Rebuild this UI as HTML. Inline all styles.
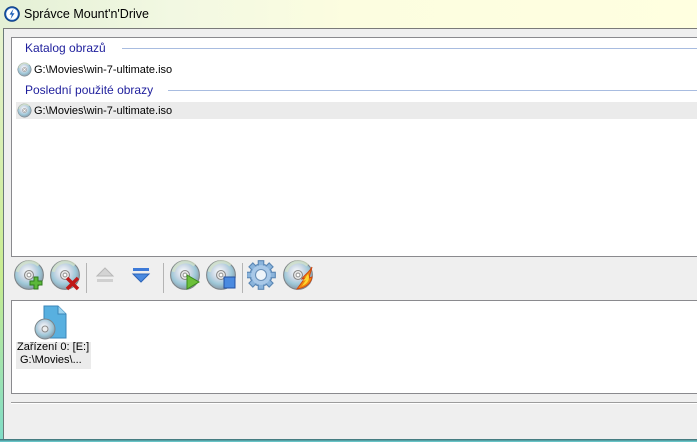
<!DOCTYPE html>
<html><head><meta charset="utf-8"><style>
*{margin:0;padding:0;box-sizing:border-box}
body{width:697px;height:442px;overflow:hidden;position:relative;font-family:"Liberation Sans",sans-serif;font-size:12px;background:#efefef}
.title{position:absolute;left:0;top:0;width:697px;height:29px;background:linear-gradient(90deg,#e4f0d6 0%,#f2f8e2 25%,#fcfde0 50%,#ffffe0 100%)}
.title span{position:absolute;left:24px;top:7px;font-size:12.5px;color:#000}
.frame{position:absolute;left:0;top:29px;width:3px;height:413px;background:linear-gradient(180deg,#e6f2d0,#c8ec90 60%,#7fdcc8)}
.fl{position:absolute;left:3px;top:28px;width:1px;height:412px;background:#6a7a7a}
.ft{position:absolute;left:3px;top:28px;width:694px;height:1px;background:#7a7a7a}
.fb{position:absolute;left:0;top:439px;width:697px;height:3px;background:linear-gradient(180deg,#3d6a70,#6fd6d8)}
.body{position:absolute;left:4px;top:29px;width:693px;height:410px;background:#efefef}
.p1{position:absolute;left:11px;top:37px;width:690px;height:220px;background:#fff;border:1px solid #8a8a8e}
.p2{position:absolute;left:11px;top:300px;width:690px;height:94px;background:#fff;border:1px solid #8a8a8e}
.hdr{position:absolute;left:13px;color:#1e1e9c;font-size:12px}
.line{position:absolute;height:1px;background:#a8bce0}
.item{position:absolute;left:5px;height:16px;font-size:11px;color:#000}
.item .t{position:absolute;left:17px;top:2px;white-space:nowrap}
.sel{position:absolute;left:4px;top:64px;width:686px;height:17px;background:#ebebeb}
.sep{position:absolute;left:11px;top:402px;width:686px;height:1px;background:#9c9c9c}
.sep2{position:absolute;left:11px;top:403px;width:686px;height:1px;background:#fff}
.tb{position:absolute;top:259px}
.vs{position:absolute;top:263px;width:1px;height:30px;background:#b4b4b4}
</style></head><body>
<div class="title"><svg style="position:absolute;left:4px;top:6px" width="16" height="16" viewBox="0 0 16 16"><circle cx="8" cy="8" r="7.3" fill="#1d5fb8" stroke="#0b3a80"/><circle cx="8" cy="8" r="5.8" fill="#fff"/><path d="M9.5 2.8 5.5 8.6h2.4l-1.4 4.6 4-5.9H8.1z" fill="#1d5fb8"/></svg><span>Správce Mount'n'Drive</span></div>
<div class="frame"></div><div class="body"></div>
<div class="fl"></div><div class="ft"></div><div class="fb"></div>
<svg width="0" height="0" style="position:absolute"><defs>
<radialGradient id="cd" cx="45%" cy="40%" r="60%"><stop offset="0" stop-color="#ffffff"/><stop offset=".45" stop-color="#c8d6e4"/><stop offset=".7" stop-color="#9ec8d8"/><stop offset="1" stop-color="#8a9aa8"/></radialGradient>
<symbol id="disc" viewBox="0 0 30 30"><circle cx="15" cy="15" r="13.5" fill="url(#cd)" stroke="#7d8488"/><path d="M4 12a12 12 0 0 1 20-6" stroke="#d8e4c8" stroke-width="3" fill="none" opacity=".7"/><circle cx="15" cy="15" r="4.2" fill="#eaeaea" stroke="#888"/><circle cx="15" cy="15" r="1.8" fill="#fff" stroke="#999"/></symbol>
</defs></svg>
<div class="p1">
<div class="hdr" style="top:3px">Katalog obrazů</div><div class="line" style="left:110px;top:10px;width:580px"></div>
<div class="item" style="top:24px"><svg width="15" height="15" style="position:absolute;left:0;top:0"><use href="#disc"/></svg><span class="t">G:\Movies\win-7-ultimate.iso</span></div>
<div class="hdr" style="top:45px">Poslední použité obrazy</div><div class="line" style="left:156px;top:52px;width:534px"></div>
<div class="sel"></div>
<div class="item" style="top:65px"><svg width="15" height="15" style="position:absolute;left:0;top:0"><use href="#disc"/></svg><span class="t">G:\Movies\win-7-ultimate.iso</span></div>
</div>
<svg class="tb" style="left:13px" width="32" height="32"><use href="#disc" x="0" y="0" width="32" height="32"/><path d="M21 18h4v4h4v4h-4v4h-4v-4h-4v-4h4z" fill="#5cb83a" stroke="#2e7a1c"/></svg>
<svg class="tb" style="left:49px" width="32" height="32"><use href="#disc" width="32" height="32"/><path d="M18 19l11 11M29 19 18 30" stroke="#c01818" stroke-width="3.5"/></svg>
<div class="vs" style="left:86px"></div>
<svg class="tb" style="left:93px" width="26" height="32"><path d="M4 17 12 9l8 8z" fill="#d4d4d4" stroke="#b8b8b8"/><rect x="4" y="20" width="16" height="3" fill="#d0d0d0"/></svg>
<svg class="tb" style="left:129px" width="26" height="32"><rect x="4" y="9" width="16" height="3" fill="#3d7ad8"/><path d="M4 15h16l-8 8z" fill="#4a8ae0" stroke="#2c64b8"/></svg>
<div class="vs" style="left:163px"></div>
<svg class="tb" style="left:169px" width="32" height="32"><use href="#disc" width="32" height="32"/><path d="M18 16v14l12-7z" fill="#6cc03a" stroke="#3a8a1c"/></svg>
<svg class="tb" style="left:205px" width="32" height="32"><use href="#disc" width="32" height="32"/><rect x="19" y="18" width="11" height="11" fill="#4a8ae0" stroke="#2450a0"/></svg>
<div class="vs" style="left:242px"></div>
<svg class="tb" style="left:247px" width="30" height="32" viewBox="0 0 30 32"><g transform="translate(14 16) scale(1.1)"><g fill="#8ab4dc" stroke="#5a86b4"><circle r="10"/><g id="tth"><rect x="-2.5" y="-13" width="5" height="5"/></g><use href="#tth" transform="rotate(45)"/><use href="#tth" transform="rotate(90)"/><use href="#tth" transform="rotate(135)"/><use href="#tth" transform="rotate(180)"/><use href="#tth" transform="rotate(225)"/><use href="#tth" transform="rotate(270)"/><use href="#tth" transform="rotate(315)"/></g><circle r="9" fill="#a8c8e8"/><circle r="5" fill="#eef4fa" stroke="#6a90b8"/></g></svg>
<svg class="tb" style="left:282px" width="32" height="32"><use href="#disc" width="32" height="32"/><path d="M30 8c-3 6-8 8-10 12l3-1-8 11c6-1 14-4 15-12l-3 1z" fill="#f08a10" stroke="#d04810"/><path d="M26 15l-5 7 3-1-4 6c4-2 7-4 7-9z" fill="#ffd830"/></svg>
<div class="p2">
<div style="position:absolute;left:4px;top:41px;width:75px;height:27px;background:#ebebeb"></div>
<svg style="position:absolute;left:22px;top:3px" width="34" height="36" viewBox="0 0 34 36"><path d="M10 2h14l8 8v24H10z" fill="#58b0e0" stroke="#3a86b8"/><path d="M24 2v8h8" fill="#9cd4f0" stroke="#3a86b8"/><circle cx="11" cy="25" r="10" fill="url(#cd)" stroke="#7d8488"/><circle cx="11" cy="25" r="3" fill="#eee" stroke="#888"/></svg>
<div style="position:absolute;left:5px;top:40px;font-size:11px;white-space:nowrap">Zařízení 0: [E:]</div>
<div style="position:absolute;left:8px;top:53px;font-size:11px;white-space:nowrap">G:\Movies\...</div>
</div>
<div class="sep"></div><div class="sep2"></div>
</body></html>
